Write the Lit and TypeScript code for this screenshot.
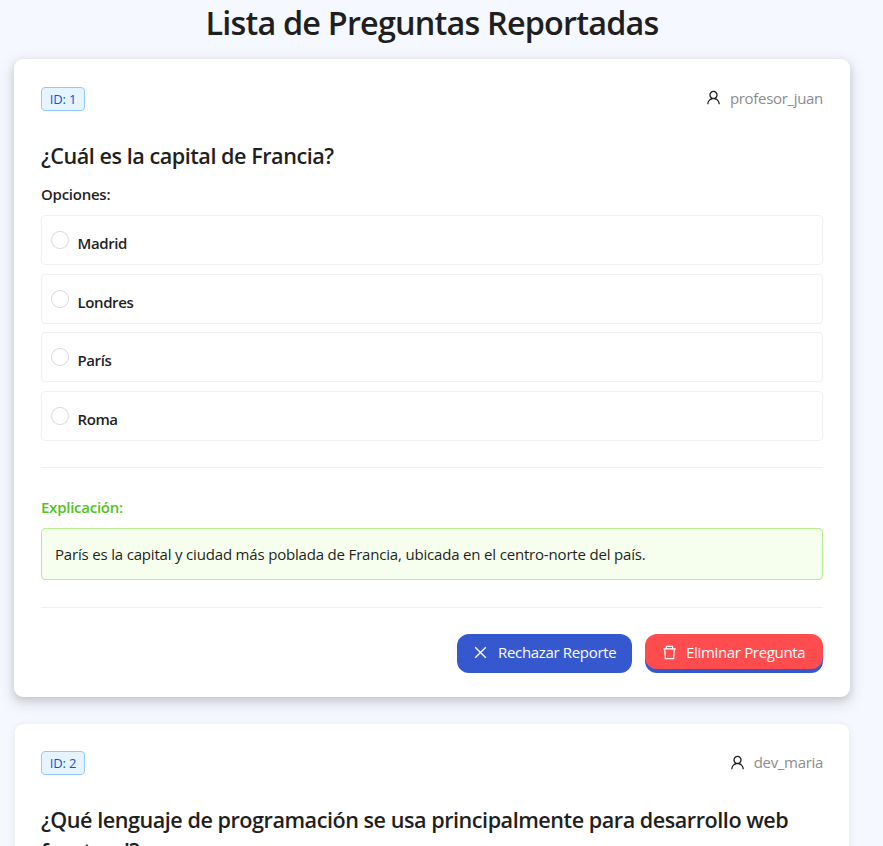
import { LitElement, html, css, svg, nothing } from "lit";
import { customElement, property } from "lit/decorators.js";

interface Report {
  id: number;
  author: string;
  question: string;
  options: string[];
  explanation: string;
}

const ICONS: Record<string, string> = {
  user: "M858.5 763.6a374 374 0 00-80.6-119.5 375.63 375.63 0 00-119.5-80.6c-.4-.2-.8-.3-1.2-.5C719.5 518 760 444.7 760 362c0-137-111-248-248-248S264 225 264 362c0 82.7 40.5 156 102.8 201.1-.4.2-.8.3-1.2.5-44.8 18.9-85 46-119.5 80.6a375.63 375.63 0 00-80.6 119.5A371.7 371.7 0 00136 901.8a8 8 0 008 8.2h60c4.4 0 7.9-3.5 8-7.8 2-77.2 33-149.5 87.8-204.3 56.7-56.7 132-87.9 212.2-87.9s155.5 31.2 212.2 87.9C779 752.7 810 825 812 902.2c.1 4.4 3.6 7.8 8 7.8h60a8 8 0 008-8.2c-1-47.8-10.9-94.3-29.5-138.2zM512 534c-45.9 0-89.1-17.9-121.6-50.4S340 407.9 340 362c0-45.9 17.9-89.1 50.4-121.6S466.1 190 512 190s89.1 17.9 121.6 50.4S684 316.1 684 362c0 45.9-17.9 89.1-50.4 121.6S557.9 534 512 534z",
  close: "M800 166l58 58L570 512l288 288-58 58L512 570 224 858l-58-58 288-288L166 224l58-58 288 288z",
  trash: "M360 184h-8c4.4 0 8-3.6 8-8v8h304v-8c0 4.4 3.6 8 8 8h-8v72h72v-80c0-35.3-28.7-64-64-64H352c-35.3 0-64 28.7-64 64v80h72v-72zm504 72H160c-17.7 0-32 14.3-32 32v32c0 4.4 3.6 8 8 8h60.4l24.7 523c1.6 34.1 29.8 61 63.9 61h454c34.2 0 62.3-26.8 63.9-61l24.7-523H888c4.4 0 8-3.6 8-8v-32c0-17.7-14.3-32-32-32zM731.3 840H292.7l-24.2-512h487l-24.2 512z",
};

const icon = (name: string) => html`<svg class="icon" viewBox="64 64 896 896" aria-hidden="true">
  ${svg`<path d=${ICONS[name]} fill="currentColor" />`}
</svg>`;

const REPORTS: Report[] = [
  {
    id: 1,
    author: "profesor_juan",
    question: "¿Cuál es la capital de Francia?",
    options: ["Madrid", "Londres", "París", "Roma"],
    explanation: "París es la capital y ciudad más poblada de Francia, ubicada en el centro-norte del país.",
  },
  {
    id: 2,
    author: "dev_maria",
    question: "¿Qué lenguaje de programación se usa principalmente para desarrollo web frontend?",
    options: [],
    explanation: "",
  },
];

@customElement("report-card")
export class ReportCard extends LitElement {
  @property({ attribute: false }) report!: Report;
  @property({ type: Boolean, reflect: true }) raised = false;

  static styles = css`
    :host {
      display: block;
      box-sizing: border-box;
      border: 1px solid #f0f0f0;
      border-radius: 9px;
      padding: 27px 26px 23px;
      background: #fff;
      background-clip: padding-box;
      box-shadow: 0 2px 9px rgba(0, 0, 0, 0.06);
    }
    :host([raised]) {
      border-color: transparent;
      background-clip: border-box;
      box-shadow: 0 1px 2px -2px rgba(0, 0, 0, 0.16), 0 3px 7px rgba(0, 0, 0, 0.12),
        0 5px 13px 4px rgba(0, 0, 0, 0.09);
    }
    .icon {
      width: 15px;
      height: 15px;
      flex: none;
    }
    .head {
      display: flex;
      justify-content: space-between;
      height: 24px;
      align-items: center;
    }
    .tag {
      box-sizing: border-box;
      width: 44px;
      height: 24px;
      border: 1px solid #91caff;
      border-radius: 4px;
      background: #e6f4ff;
      color: #0958d9;
      font-size: 13px;
      line-height: 23px;
      letter-spacing: -0.2px;
      text-align: center;
    }
    .author {
      display: flex;
      align-items: center;
      gap: 9px;
    }
    .author .icon {
      margin-top: -2px;
    }
    .author span {
      color: #8c8c8c;
      line-height: 22px;
      padding-bottom: 1.8px;
      letter-spacing: -0.32px;
    }
    .question {
      margin: 30px 0 0;
      font-size: 21.6px;
      line-height: 30.8px;
      font-weight: 600;
      letter-spacing: -0.47px;
    }
    .label {
      font-weight: 600;
      line-height: 24px;
      letter-spacing: -0.25px;
    }
    .options-label {
      margin-top: 10px;
    }
    .options {
      display: grid;
      gap: 8.67px;
      margin-top: 9.3px;
    }
    .option {
      box-sizing: border-box;
      height: 50px;
      border: 1px solid #f0f0f0;
      border-radius: 4px;
      padding: 15px 9px 0;
      display: flex;
      align-items: flex-start;
      gap: 8.5px;
      font-weight: 600;
      letter-spacing: -0.4px;
    }
    .radio {
      box-sizing: border-box;
      width: 18px;
      height: 18px;
      border: 1px solid #d9d9d9;
      border-radius: 50%;
    }
    .option span {
      line-height: 25px;
    }
    .rule {
      height: 1px;
      background: #f0f0f0;
      margin-top: 26px;
    }
    .green {
      color: #52c41a;
      margin-top: 27px;
    }
    .explanation {
      box-sizing: border-box;
      height: 52px;
      margin-top: 9px;
      padding: 0 13px;
      border: 1px solid #b7eb8f;
      border-radius: 4px;
      background: #f6ffed;
      line-height: 51px;
      letter-spacing: -0.18px;
      white-space: nowrap;
    }
    .explanation + .rule {
      margin-top: 26.7px;
    }
    .actions {
      display: flex;
      justify-content: flex-end;
      gap: 13px;
      margin-top: 26px;
    }
    .btn {
      box-sizing: border-box;
      height: 35px;
      margin: 0 0 4px;
      padding: 0 16px;
      border: 0;
      border-radius: 12px;
      display: flex;
      align-items: center;
      gap: 10px;
      color: #fff;
      font: inherit;
      letter-spacing: -0.33px;
      white-space: nowrap;
      box-shadow: 0 4px 0 #3658cf;
    }
    .btn .icon {
      margin-top: 2px;
    }
    .btn span {
      line-height: 34px;
      padding-top: 2px;
    }
    .reject {
      width: 175px;
      background: #3658cf;
    }
    .delete {
      width: 178px;
      padding-left: 17px;
      gap: 9px;
      background: #ff4d4f;
    }
  `;

  render() {
    const r = this.report;
    return html`
      <div class="head">
        <div class="tag">ID: ${r.id}</div>
        <div class="author">${icon("user")}<span>${r.author}</span></div>
      </div>
      <h4 class="question">${r.question}</h4>
      ${r.options.length
        ? html`
            <div class="label options-label">Opciones:</div>
            <div class="options">
              ${r.options.map((o) => html`<label class="option"><i class="radio"></i><span>${o}</span></label>`)}
            </div>
            <div class="rule"></div>
            <div class="label green">Explicación:</div>
            <div class="explanation">${r.explanation}</div>
            <div class="rule"></div>
            <div class="actions">
              <button class="btn reject">${icon("close")}<span>Rechazar Reporte</span></button>
              <button class="btn delete">${icon("trash")}<span>Eliminar Pregunta</span></button>
            </div>
          `
        : nothing}
    `;
  }
}

@customElement("app-root")
export class AppRoot extends LitElement {
  static styles = css`
    :host {
      display: block;
      box-sizing: border-box;
      height: 846px;
      overflow: hidden;
      padding: 0 33px 0 14px;
      background: #f5f8ff;
      color: #1f1f1f;
      font-family: "Segoe UI", "Open Sans", "Noto Sans", sans-serif;
      font-size: 15px;
      line-height: 24px;
    }
    h1 {
      margin: 0;
      height: 59px;
      font-size: 32.4px;
      line-height: 45px;
      font-weight: 600;
      letter-spacing: -0.82px;
      text-align: center;
      white-space: nowrap;
    }
    .list {
      display: flex;
      flex-direction: column;
      gap: 26.4px;
    }
    report-card {
      height: 638px;
      flex: none;
    }
  `;

  render() {
    return html`
      <h1>Lista de Preguntas Reportadas</h1>
      <div class="list">
        ${REPORTS.map(
          (r, i) => html`<report-card .report=${r} ?raised=${i === 0}></report-card>`,
        )}
      </div>
    `;
  }
}
